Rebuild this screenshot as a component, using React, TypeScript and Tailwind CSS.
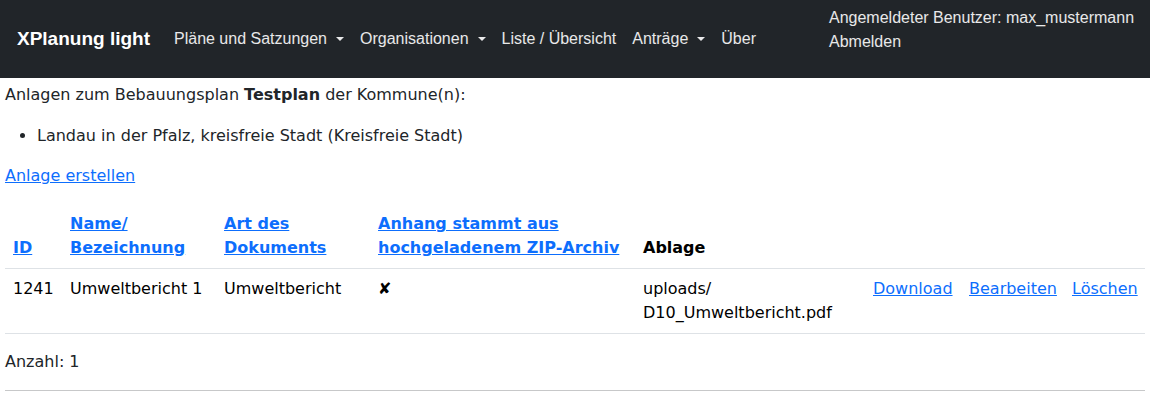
import React from 'react'

const caret = (
  <span className="ml-[9px] inline-block align-[3px] border-x-[4.8px] border-t-[4.8px] border-x-transparent border-t-current" />
)

export default function App() {
  const navItems: { label: string; dropdown?: boolean }[] = [
    { label: 'Pläne und Satzungen', dropdown: true },
    { label: 'Organisationen', dropdown: true },
    { label: 'Liste / Übersicht' },
    { label: 'Anträge', dropdown: true },
    { label: 'Über' },
  ]

  const link = 'text-[#0d6efd] underline'
  const th = 'px-2 py-2 text-left align-bottom font-bold border-b border-[#dee2e6]'
  const td = 'px-2 py-2 align-top border-b border-[#dee2e6]'

  return (
    <div className="min-h-[406px] bg-white text-[#212529] text-[16px] leading-6 font-['DejaVu_Sans',sans-serif]">
      {/* Navbar */}
      <nav className="h-[78px] bg-[#212529] flex items-center px-[17px] whitespace-nowrap font-['Liberation_Sans',Arial,sans-serif]">
        <span className="shrink-0 text-white font-bold text-[19px] mr-4 -mt-px">XPlanung light</span>
        <ul className="shrink-0 flex items-center">
          {navItems.map((item) => (
            <li key={item.label} className="px-2 text-white/90">
              {item.label}
              {item.dropdown && caret}
            </li>
          ))}
        </ul>
        <div className="shrink-0 ml-[65px] self-start mt-[6px] text-white/90 leading-6">
          <div>Angemeldeter Benutzer: max_mustermann</div>
          <div>Abmelden</div>
        </div>
      </nav>

      <div className="px-[5px] pt-[5px]">
        <p className="mb-4">
          Anlagen zum Bebauungsplan <b>Testplan</b> der Kommune(n):
        </p>
        <ul className="list-disc pl-8 mb-4 pt-px">
          <li>Landau in der Pfalz, kreisfreie Stadt (Kreisfreie Stadt)</li>
        </ul>
        <p className="mb-4">
          <a href="#" className={link}>Anlage erstellen</a>
        </p>

        <table className="w-full table-fixed border-collapse mb-4 text-black">
          <colgroup>
            <col className="w-[57px]" />
            <col className="w-[154px]" />
            <col className="w-[154px]" />
            <col className="w-[265px]" />
            <col className="w-[230px]" />
            <col className="w-[96px]" />
            <col className="w-[103px]" />
            <col className="w-[81px]" />
          </colgroup>
          <thead>
            <tr>
              <th className={th}><a href="#" className={link}>ID</a></th>
              <th className={th}><a href="#" className={link}>Name/<br />Bezeichnung</a></th>
              <th className={th}><a href="#" className={link}>Art des Dokuments</a></th>
              <th className={th}><a href="#" className={link}>Anhang stammt aus hochgeladenem ZIP-Archiv</a></th>
              <th className={th}>Ablage</th>
              <th className={th}></th>
              <th className={th}></th>
              <th className={th}></th>
            </tr>
          </thead>
          <tbody>
            <tr>
              <td className={td}>1241</td>
              <td className={td}>Umweltbericht 1</td>
              <td className={td}>Umweltbericht</td>
              <td className={td}>✘</td>
              <td className={td}>uploads/<wbr />D10_Umweltbericht.pdf</td>
              <td className={td}><a href="#" className={link}>Download</a></td>
              <td className={td}><a href="#" className={link}>Bearbeiten</a></td>
              <td className={td}><a href="#" className={link}>Löschen</a></td>
            </tr>
          </tbody>
        </table>

        <p className="mb-4">Anzahl: 1</p>
        <hr className="border-0 border-t border-[#212529]/25" />
      </div>
    </div>
  )
}
